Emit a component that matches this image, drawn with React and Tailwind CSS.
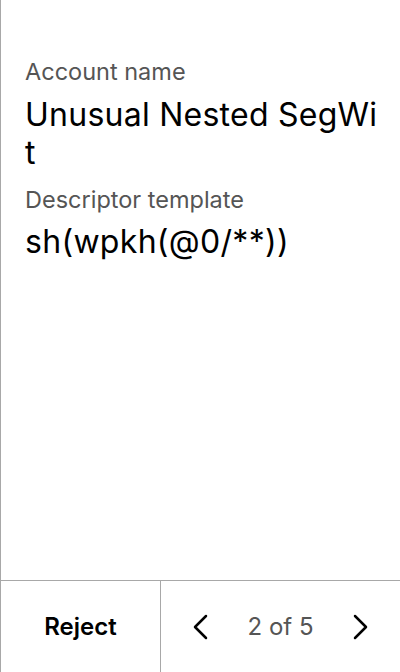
function Chevron({ dir }) {
  return (
    <svg width="16" height="26" viewBox="0 0 16 26" fill="none" stroke="currentColor" strokeWidth="2.5" strokeLinecap="round" strokeLinejoin="round">
      {dir === "left" ? <path d="M14 2 L3 13 L14 24" /> : <path d="M2 2 L13 13 L2 24" />}
    </svg>
  );
}

export default function App() {
  return (
    <div
      className="w-[400px] h-[672px] bg-white flex flex-col border-l border-[#a8a8a8] text-black"
      style={{ fontFamily: "Inter, 'Noto Sans', sans-serif" }}
    >
      <div className="flex-1 pl-6 pr-6 pt-[58px]">
        <p className="text-[23.5px] leading-[28px] text-[#555]">Account name</p>
        <p className="text-[32px] leading-[38px] mt-[10px] mr-[-8px] break-all tracking-[0.25px]">Unusual Nested SegWit</p>
        <p className="text-[23.5px] leading-[28px] text-[#555] mt-[14px]">Descriptor template</p>
        <p className="text-[32px] leading-[38px] mt-[9px] break-all tracking-[0.3px]">sh(wpkh(@0/**))</p>
      </div>
      <div className="h-[92px] border-t border-[#a8a8a8] flex">
        <button className="w-[160px] border-r border-[#a8a8a8] text-[24px] font-semibold">
          Reject
        </button>
        <div className="flex-1 flex items-center justify-between px-[31px]">
          <Chevron dir="left" />
          <span className="text-[24px] text-[#555]">2 of 5</span>
          <Chevron dir="right" />
        </div>
      </div>
    </div>
  );
}
